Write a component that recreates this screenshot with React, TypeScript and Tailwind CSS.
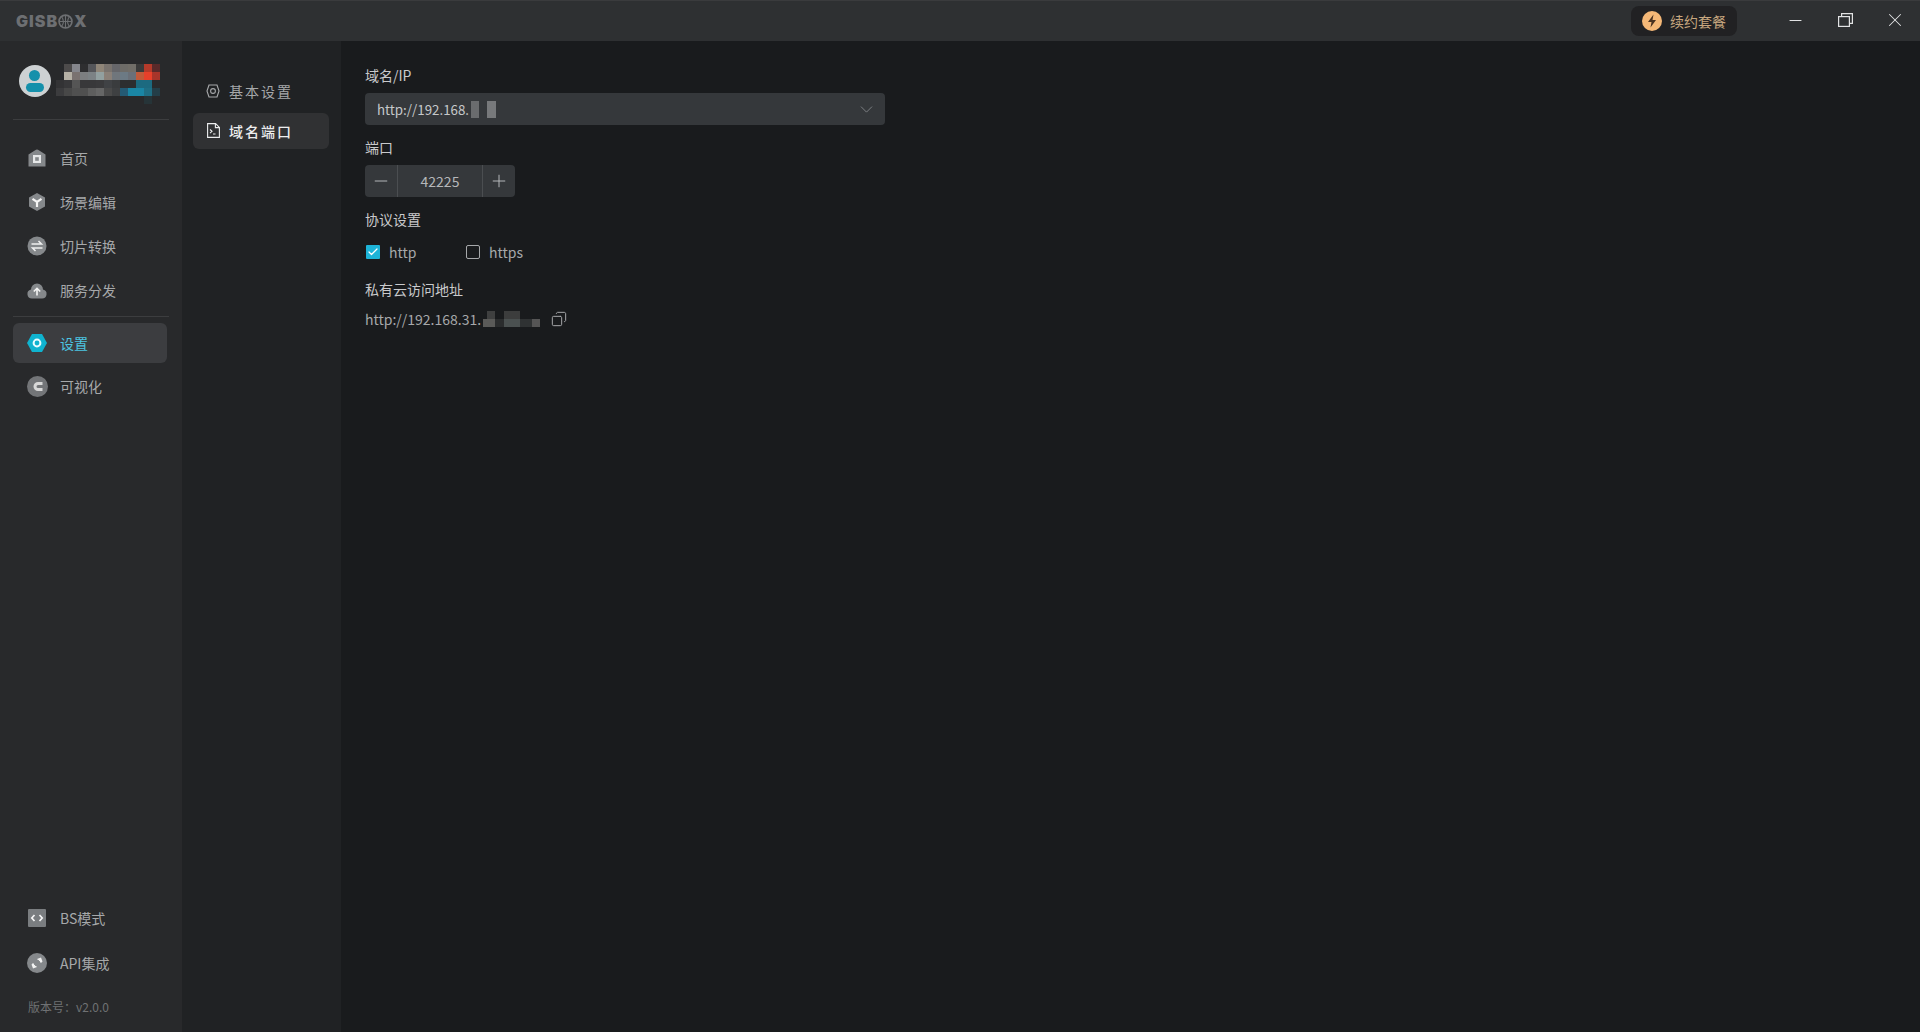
import type { ReactNode } from 'react';
import { ChevronDown, Minus, Plus, Check, X, Copy } from 'lucide-react';

const font = 'font-["Noto_Sans_CJK_SC","Noto_Sans",sans-serif]';

const IconHome = () => (
  <svg width="18" height="18" viewBox="0 0 18 18">
    <path d="M0.500 5.500 8 .8q1-.6 2 0l7.500 4.700V17.500H.500z" fill="#85888b" />
    <rect x="5" y="6" width="8" height="8" fill="#e6e7e8" />
    <rect x="7.200" y="8.200" width="3.600" height="3.600" fill="#85888b" />
  </svg>
);

const IconScene = () => (
  <svg width="18" height="18" viewBox="0 0 18 18">
    <path d="M9 0l8 4.500v9L9 18l-8-4.500v-9z" fill="#85888b" />
    <path d="M4.500 5.800 9 9l4.500-3.200M9 9v5" stroke="#f4f4f4" strokeWidth="2.200" fill="none" />
  </svg>
);

const IconConvert = () => (
  <svg width="20" height="20" viewBox="0 0 20 20">
    <circle cx="10" cy="10" r="9.500" fill="#85888b" />
    <path d="M4.500 8h10l-3-3M15.500 12h-10l3 3" stroke="#f0f0f0" strokeWidth="1.500" fill="none" />
  </svg>
);

const IconUpload = () => (
  <svg width="20" height="18" viewBox="0 0 20 18">
    <path d="M5 17.500a4.500 4.500 0 0 1-1-8.900 6 6 0 0 1 12 0 4.500 4.500 0 0 1-1 8.900z" fill="#85888b" />
    <path d="M10 14.500V7.500M6.800 10.500 10 7.300l3.200 3.200" stroke="#f4f4f4" strokeWidth="1.600" fill="none" />
  </svg>
);

const IconSetting = () => (
  <svg width="20" height="18" viewBox="0 0 20 18">
    <path d="M5 0h10l5 9-5 9H5L0 9z" fill="#0fb3cf" />
    <circle cx="10" cy="9" r="3.400" stroke="#e8fbff" strokeWidth="2" fill="none" />
  </svg>
);

const IconVisual = () => (
  <svg width="21" height="21" viewBox="0 0 21 21">
    <circle cx="10.500" cy="10.500" r="10.500" fill="#737578" />
    <path d="M15.500 7.500H11a3 3 0 0 0 0 6h4.500" stroke="#d8d8d8" strokeWidth="3" fill="none" />
  </svg>
);

const IconBs = () => (
  <svg width="18" height="18" viewBox="0 0 18 18">
    <rect width="18" height="18" rx="1" fill="#7a7d80" />
    <path d="M6.500 6 3.800 9l2.700 3M11.500 6l2.700 3-2.700 3" stroke="#f4f4f4" strokeWidth="1.700" fill="none" />
  </svg>
);

const IconApi = () => (
  <svg width="20" height="20" viewBox="0 0 20 20">
    <circle cx="10" cy="10" r="10" fill="#85888b" />
    <path d="M10 6l4-1.500 1.500 4-1.500 1.500-4-4zM10 14l-4 1.500-1.500-4 1.500-1.500 4 4z" fill="#f2f2f2" />
    <path d="M8 12l4-4" stroke="#85888b" strokeWidth="1.200" />
    <path d="M11.200 7.200l1.600 1.600M7.200 11.200l1.600 1.600" stroke="#85888b" strokeWidth="1" />
  </svg>
);

const navTop = [
  { label: '首页', icon: <IconHome /> },
  { label: '场景编辑', icon: <IconScene /> },
  { label: '切片转换', icon: <IconConvert /> },
  { label: '服务分发', icon: <IconUpload /> },
];

// mosaic covering the account name
const mosaic = [
  ['bg-transparent', 'bg-[#4d4b4b]', 'bg-[#85868c]', 'bg-[#2e2e30]', 'bg-[#55565a]', 'bg-[#8f8578]', 'bg-[#79736e]', 'bg-[#66666a]', 'bg-[#6e6c68]', 'bg-[#716e68]', 'bg-[#3a3a3a]', 'bg-[#b53a2a]', 'bg-[#5a2a2a]'],
  ['bg-transparent', 'bg-[#b5b0a5]', 'bg-[#7a7270]', 'bg-[#7c7e80]', 'bg-[#7c8285]', 'bg-[#92a0a0]', 'bg-[#8a8078]', 'bg-[#70767c]', 'bg-[#6c7a84]', 'bg-[#6a7078]', 'bg-[#c05a3a]', 'bg-[#e8402a]', 'bg-[#a8352a]'],
  ['bg-[#333335]', 'bg-[#38383a]', 'bg-[#555555]', 'bg-[#38383a]', 'bg-[#38383a]', 'bg-[#3a3a3c]', 'bg-[#404245]', 'bg-[#3a3c3e]', 'bg-[#2c2e30]', 'bg-[#2c2e30]', 'bg-[#1c6a80]', 'bg-[#1c6a80]', 'bg-[#2a2a2c]'],
  ['bg-[#3c3c3e]', 'bg-[#484848]', 'bg-[#505050]', 'bg-[#505050]', 'bg-[#5e5e5e]', 'bg-[#666666]', 'bg-[#4a4a4a]', 'bg-[#3e4042]', 'bg-[#245a74]', 'bg-[#1a86a5]', 'bg-[#1a86a5]', 'bg-[#1f6f85]', 'bg-[#243e48]'],
  ['bg-transparent', 'bg-transparent', 'bg-transparent', 'bg-transparent', 'bg-transparent', 'bg-transparent', 'bg-transparent', 'bg-transparent', 'bg-transparent', 'bg-transparent', 'bg-transparent', 'bg-[#263438]', 'bg-transparent'],
];

function NavItem({ icon, label, active }: { icon: ReactNode; label: string; active?: boolean }) {
  return (
    <div className={`mr-[2px] flex h-10 items-center rounded-md ${active ? 'bg-[#3c3d40] text-[#4cc5e2]' : 'text-[#a6a8aa]'}`}>
      <div className="flex w-[47px] shrink-0 justify-center pl-[1px]">{icon}</div>
      <span className="text-sm">{label}</span>
    </div>
  );
}

function Field({ label, children }: { label: string; children: ReactNode }) {
  return (
    <div className="mb-3">
      <div className="mb-2 h-5 text-sm leading-5 text-[#c9cacc]">{label}</div>
      {children}
    </div>
  );
}

export default function App() {
  return (
    <div className={`flex h-screen w-full flex-col overflow-hidden bg-[#191b1d] ${font}`}>
      {/* title bar */}
      <div className="flex h-[41px] shrink-0 items-center border-t border-[#3a3b3d] bg-[#2e3032] pl-4">
        <div className='flex items-center font-["Inter",sans-serif] text-base font-black leading-none tracking-[1px] text-[#6d6f72]'>
          <span>GISB</span>
          <svg width="15" height="15" viewBox="0 0 14 14" className="mr-[1px]">
            <circle cx="7" cy="7" r="6" fill="none" stroke="#6d6f72" strokeWidth="1.600" />
            <path d="M1 7h12M7 1v12M3.500 2.500c2 3 2 6 0 9M10.500 2.500c-2 3-2 6 0 9" fill="none" stroke="#6d6f72" strokeWidth="1" />
          </svg>
          <span>X</span>
        </div>
        <div className="ml-auto flex h-[30px] w-[106px] items-center rounded-lg bg-[#212123] pl-[11px]">
          <svg width="20" height="20" viewBox="0 0 20 20">
            <circle cx="10" cy="10" r="10" fill="#f5b877" />
            <path d="M11.500 3.500 6 11h3.500l-1 5.500L14 9h-3.500z" fill="#4a3220" />
          </svg>
          <span className="ml-[8px] text-sm text-[#c6a67f]">续约套餐</span>
        </div>
        <div className="mb-[2px] flex items-center text-[#e2e3e4]">
          <div className="ml-[33px] flex w-[50px] justify-center">
            <Minus size={19} strokeWidth={1.300} />
          </div>
          <div className="flex w-[50px] justify-center">
            <svg width="15" height="14" viewBox="0 0 15 14" fill="none" stroke="#e2e3e4" strokeWidth="1.200">
              <rect x=".6" y="3.600" width="10.800" height="9.800" />
              <path d="M3.600 3.600V.6h10.800v9.800h-3" />
            </svg>
          </div>
          <div className="flex w-[50px] justify-center">
            <X size={22} strokeWidth={1.100} />
          </div>
        </div>
      </div>

      <div className="flex min-h-0 flex-1">
        {/* main nav */}
        <aside className="flex w-[182px] shrink-0 flex-col bg-[#28292b] px-[13px]">
          <div className="flex h-[79px] items-start border-b border-[#3c3d3f] pt-6">
            <div className="relative ml-[6px] h-8 w-8 overflow-hidden rounded-full bg-[#cdd1d3]">
              <div className="absolute left-[10px] top-[5px] h-[11px] w-[11px] rounded-full bg-[#1490ab]" />
              <div className="absolute left-[7px] top-[18px] h-[9px] w-[18px] rounded-full bg-[#1490ab]" />
            </div>
            <div className="ml-[5px] -mt-[1px]">
              {mosaic.map((row, i) => (
                <div key={i} className="flex h-2">
                  {row.map((c, j) => (
                    <div key={j} className={`h-2 w-2 ${c}`} />
                  ))}
                </div>
              ))}
            </div>
          </div>
          <div className="mt-[18px] flex flex-col gap-1">
            {navTop.map((n) => (
              <NavItem key={n.label} icon={n.icon} label={n.label} />
            ))}
          </div>
          <div className="mt-[6px] border-t border-[#3c3d3f] pt-[6px]">
            <NavItem icon={<IconSetting />} label="设置" active />
            <div className="mt-[3px]">
              <NavItem icon={<IconVisual />} label="可视化" />
            </div>
          </div>
          <div className="mt-auto flex flex-col gap-[5px]">
            <NavItem icon={<IconBs />} label="BS模式" />
            <NavItem icon={<IconApi />} label="API集成" />
          </div>
          <div className="mb-4 mt-[15px] pl-[15px] text-xs leading-[18px] text-[#6f7173]">版本号：v2.0.0</div>
        </aside>

        {/* sub nav */}
        <div className="flex w-[159px] shrink-0 flex-col bg-[#202224] pl-[11px] pr-[12px] pt-[31px]">
          <div className="flex h-[41px] items-center pb-1 pl-[13px] text-sm tracking-[2px] text-[#a6a8aa]">
            <svg width="14" height="14" viewBox="0 0 14 14" fill="none" stroke="currentColor" strokeWidth="1.100" className="mr-[9px]">
              <path d="M3 1h8c.6 2 1.400 4 2 6-.6 2-1.400 4-2 6H3C2.400 11 1.600 9 1 7c.6-2 1.400-4 2-6z" />
              <circle cx="7" cy="7" r="2.400" />
            </svg>
            基本设置
          </div>
          <div className="flex h-9 items-center rounded-md bg-[#303133] pb-[1px] pl-[14px] text-sm font-medium tracking-[2px] text-[#ecedee]">
            <svg width="13" height="15" viewBox="0 0 13 15" fill="none" stroke="currentColor" strokeWidth="1.100" className="mr-[9px]">
              <path d="M.6.6h8l3.800 3.800v10H.6z" />
              <path d="M8.400.6v4h4M3 6.500l2 1.800-2 1.800M6 11h2.500" />
            </svg>
            域名端口
          </div>
        </div>

        {/* content */}
        <main className="min-w-0 flex-1 pl-6 pt-6 text-sm">
          <Field label="域名/IP">
            <div className="flex h-8 w-[520px] items-center justify-between rounded bg-[#35383b] pl-3 pr-2 text-[#c6c8ca]">
              <span className="w-[94px] pt-[1px] text-[13.33px]">http://192.168.</span>
              <span className="h-[17px] w-2 bg-[#6a6c6e]" />
              <span className="ml-2 mr-auto h-[17px] w-[9px] bg-[#77797b]" />
              <ChevronDown size={21} strokeWidth={1} className="text-[#85888b]" />
            </div>
          </Field>
          <Field label="端口">
            <div className="flex h-8 w-[150px] items-stretch rounded bg-[#35383b] text-[#b5b7b9]">
              <div className="flex w-[33px] items-center justify-center border-r border-[#4b4e51] text-[#c0c2c4]">
                <Minus size={20} strokeWidth={1.100} />
              </div>
              <div className="flex flex-1 items-center justify-center">42225</div>
              <div className="flex w-[33px] items-center justify-center border-l border-[#4b4e51] text-[#c0c2c4]">
                <Plus size={20} strokeWidth={1.100} />
              </div>
            </div>
          </Field>
          <Field label="协议设置">
            <div className="mb-[13px] mt-[9px] flex h-7 items-center pl-[1px] text-[#a6a8aa]">
              <div className="flex h-[14px] w-[14px] items-center justify-center rounded-[1px] bg-[#1db4d8]">
                <Check size={12} strokeWidth={2.500} className="text-white" />
              </div>
              <span className="ml-[9px] w-[77px]">http</span>
              <div className="h-[14px] w-[14px] rounded-[2px] border border-[#a6a8aa]" />
              <span className="ml-[9px]">https</span>
            </div>
          </Field>
          <Field label="私有云访问地址">
            <div className="flex h-6 items-center text-[#a6a8aa]">
              <span>http://192.168.31.</span>
              <div className="ml-[2px]">
                <div className="flex h-2">
                  <span className="ml-[4px] w-2 bg-[#3f4040]" />
                  <span className="ml-[9px] w-4 bg-[#3c3d3d]" />
                </div>
                <div className="flex h-2">
                  <span className="w-3 bg-[#5a5a58]" />
                  <span className="w-[9px] bg-[#2a2c2d]" />
                  <span className="w-4 bg-[#4a5050]" />
                  <span className="w-3 bg-[#2f3233]" />
                  <span className="w-2 bg-[#555555]" />
                </div>
              </div>
              <Copy size={16} strokeWidth={1.500} className="ml-[11px] -scale-x-100" />
            </div>
          </Field>
        </main>
      </div>
    </div>
  );
}
